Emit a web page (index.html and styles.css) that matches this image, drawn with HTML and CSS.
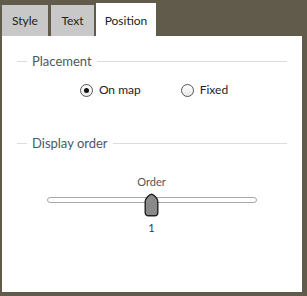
FILE: index.html
```html
<!DOCTYPE html>
<html lang="en">
<head>
    <meta charset="UTF-8">
    <meta name="viewport" content="width=device-width, initial-scale=1.0">
    <title>Layer settings</title>
    <link rel="stylesheet" href="styles.css">
</head>
<body>
    <div class="dialog">
        <div class="tabs">
            <div class="tab tab-style">Style</div>
            <div class="tab tab-text">Text</div>
            <div class="tab tab-position active">Position</div>
        </div>
        <div class="panel">
            <fieldset class="group">
                <legend>Placement</legend>
                <div class="radios">
                    <label class="radio"><span class="dot checked"></span>On map</label>
                    <label class="radio"><span class="dot"></span>Fixed</label>
                </div>
            </fieldset>

            <fieldset class="group order-group">
                <legend>Display order</legend>
                <div class="slider-block">
                    <div class="slider-label">Order</div>
                    <div class="slider">
                        <div class="track"></div>
                        <svg class="thumb" width="15" height="24" viewBox="0 0 15 24">
                            <path d="M7.5 1.2 C9.5 1.2 13.8 5.5 13.8 8.5 L13.8 19.5 C13.8 21.6 12.3 22.8 10.5 22.8 L4.5 22.8 C2.7 22.8 1.2 21.6 1.2 19.5 L1.2 8.5 C1.2 5.5 5.5 1.2 7.5 1.2 Z" fill="#8a8a8a" stroke="#222" stroke-width="1.4"/>
                        </svg>
                    </div>
                    <div class="slider-value">1</div>
                </div>
            </fieldset>
        </div>
    </div>
</body>
</html>
```

FILE: styles.css
```css
body {
    margin: 0;
    background: #615b4c;
    font-family: Lato, "Noto Sans", sans-serif;
    font-size: 12px;
    color: #333;
}
.dialog {
    padding: 3px 0 0 2px;
}
.tabs {
    display: flex;
    align-items: flex-end;
    height: 33px;
}
.tab {
    height: 31px;
    line-height: 31px;
    text-align: center;
    background: #c8c8c8;
    color: #222;
}
.tab-style {
    width: 46px;
}
.tab-text {
    width: 43px;
    margin-left: 3px;
}
.tab-position {
    width: 60px;
    margin-left: 2px;
}
.tab.active {
    height: 33px;
    line-height: 35px;
    background: #fff;
}
.panel {
    width: 270px;
    height: 239px;
    background: #fff;
    padding: 17px 15px 0 15px;
}
.group {
    margin: 0;
    padding: 0 10px;
    border: 0;
    border-top: 1px solid #dcdcdc;
}
.group legend {
    padding: 0 5px;
    line-height: 16px;
    font-size: 13px;
    color: #4c5866;
}
.radios {
    display: flex;
    justify-content: center;
    gap: 40px;
    margin-top: 13px;
    padding-left: 4px;
}
.radio {
    display: flex;
    align-items: center;
    gap: 6px;
    line-height: 16px;
    color: #222;
}
.dot {
    box-sizing: border-box;
    width: 13px;
    height: 13px;
    border: 1px solid #555;
    border-radius: 50%;
    background: linear-gradient(#fff, #e8e8e8);
    display: flex;
    align-items: center;
    justify-content: center;
}
.dot.checked::after {
    content: "";
    width: 5px;
    height: 5px;
    border-radius: 50%;
    background: #111;
}
.order-group {
    margin-top: 37px;
}
.slider-block {
    display: flex;
    flex-direction: column;
    align-items: center;
    margin-top: 24px;
    margin-left: -1px;
}
.slider-label {
    font-size: 11px;
    line-height: 14px;
    color: #555;
}
.slider {
    position: relative;
    width: 210px;
    height: 24px;
    margin-top: 5px;
    display: flex;
    align-items: flex-start;
}
.track {
    box-sizing: border-box;
    width: 210px;
    height: 6px;
    margin-top: 3px;
    border: 1px solid #a8a8a8;
    border-radius: 3px;
    background: #fff;
}
.thumb {
    position: absolute;
    left: 97px;
    top: -1px;
}
.slider-value {
    margin-top: 3px;
    font-size: 11px;
    line-height: 14px;
    color: #1f3a5c;
}
```
